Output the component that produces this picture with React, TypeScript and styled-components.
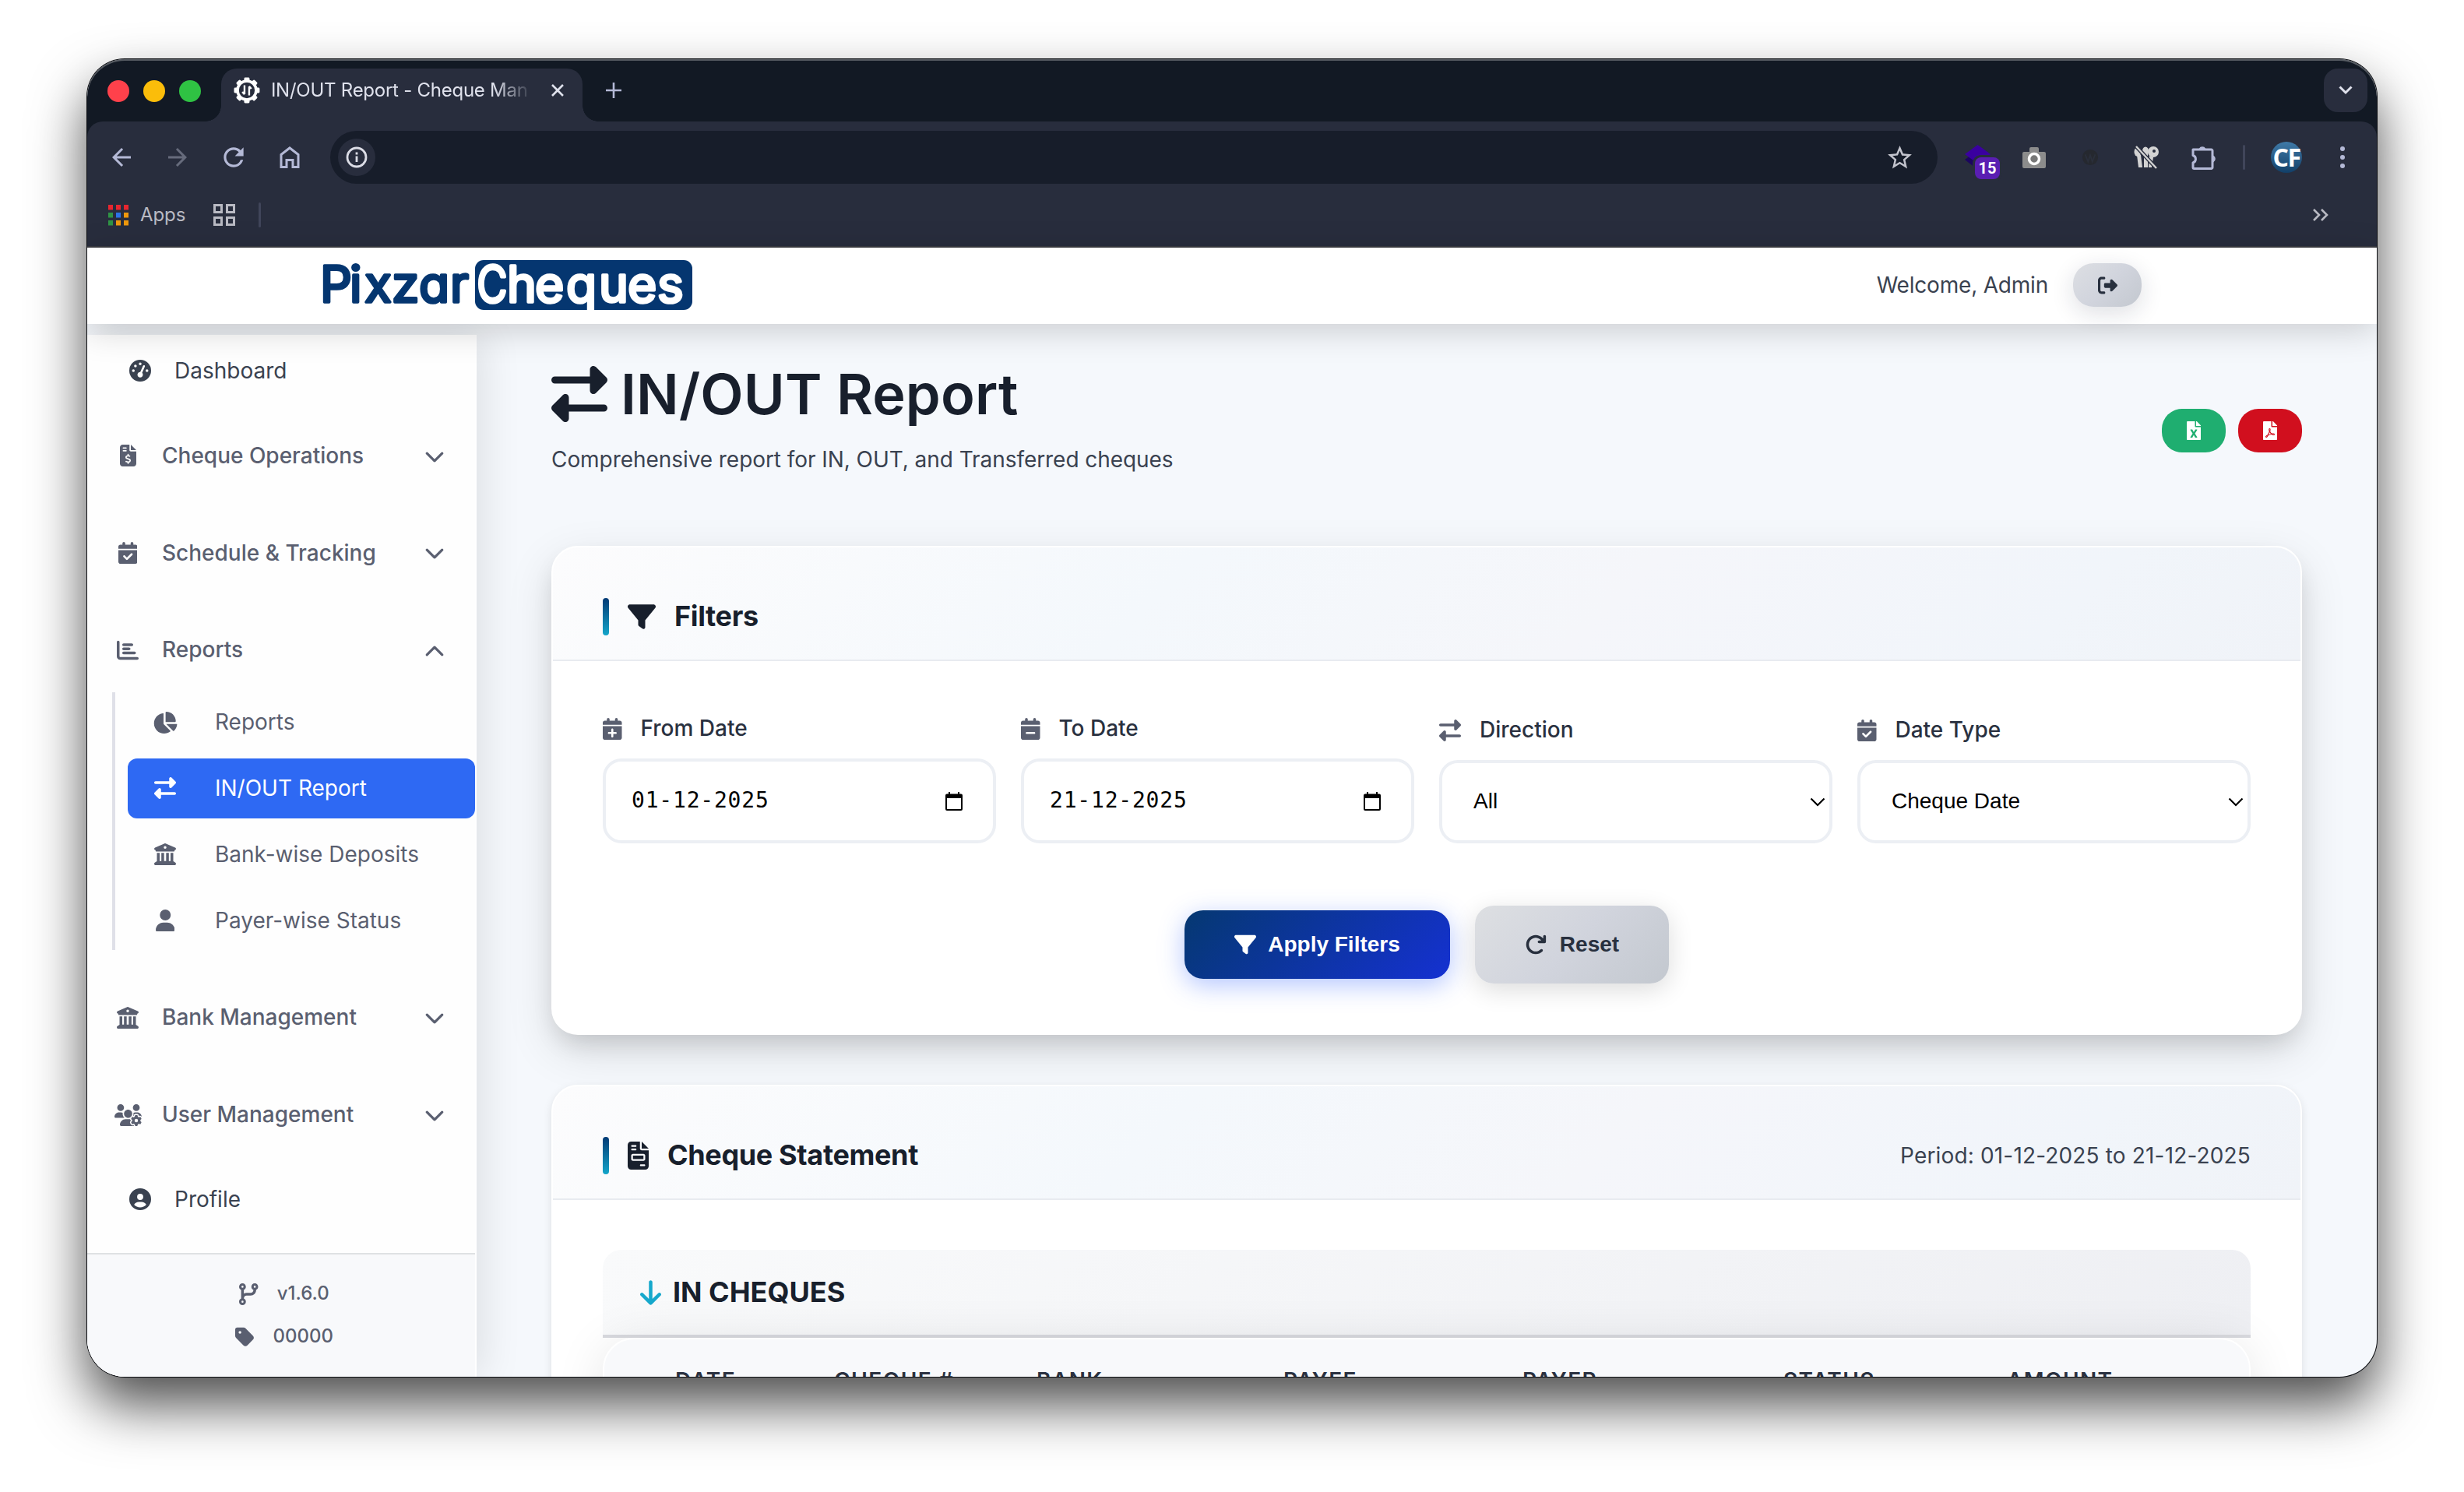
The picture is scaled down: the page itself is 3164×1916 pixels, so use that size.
import React from 'react';
import styled, { createGlobalStyle, css } from 'styled-components';
import {
  FaArrowDown,
  FaArrowRotateRight,
  FaBuildingColumns,
  FaCalendarCheck,
  FaCalendarMinus,
  FaCalendarPlus,
  FaChartBar,
  FaChartPie,
  FaCircleUser,
  FaCodeBranch,
  FaFileInvoice,
  FaFileInvoiceDollar,
  FaFilter,
  FaGaugeHigh,
  FaRightFromBracket,
  FaRightLeft,
  FaTag,
  FaUser,
  FaUsersGear,
} from 'react-icons/fa6';
import { FaFileExcel, FaFilePdf } from 'react-icons/fa';
import { BsChevronDown, BsChevronUp } from 'react-icons/bs';
import { MdArrowBack, MdArrowForward, MdRefresh, MdStarBorder } from 'react-icons/md';

const GlobalStyle = createGlobalStyle`
  * {
    box-sizing: border-box;
  }

  body {
    margin: 0;
    background: #ffffff;
    font-family: Inter, 'Liberation Sans', sans-serif;
    font-size: 28px;
    line-height: 1.6;
    color: #3a4250;
  }
`;

const Desktop = styled.div`
  width: 3164px;
  height: 1916px;
  padding: 76px 112px 0;
  overflow: hidden;
`;

const BrowserWindow = styled.div`
  display: flex;
  flex-direction: column;
  width: 2940px;
  height: 1692px;
  border-radius: 48px;
  overflow: hidden;
  background: #f5f8fc;
  box-shadow: 0 0 0 1px #0a0c10, 0 36px 70px rgba(0, 0, 0, 0.7);
`;

/* ---------- browser chrome ---------- */

const TabStrip = styled.div`
  display: flex;
  align-items: flex-end;
  height: 80px;
  padding-left: 26px;
  padding-right: 12px;
  background: #121924;
  box-shadow: inset 0 2px 0 #565b62;
  border-radius: 48px 48px 0 0;
`;

const TrafficLights = styled.div`
  display: flex;
  gap: 18px;
  margin-right: 6px;
  margin-bottom: 25px;
`;

const Light = styled.span<{ $color: string }>`
  width: 28px;
  height: 28px;
  border-radius: 50%;
  background: ${({ $color }) => $color};
`;

const TabCurve = styled.span<{ $side: 'left' | 'right' }>`
  width: 20px;
  height: 20px;
  background: radial-gradient(
    circle at ${({ $side }) => ($side === 'left' ? '0 0' : '100% 0')},
    transparent 19.5px,
    #282d3d 20px
  );
`;

const Tab = styled.div`
  display: flex;
  align-items: center;
  width: 464px;
  height: 68px;
  padding: 0 24px 12px 16px;
  border-radius: 20px 20px 0 0;
  background: #282d3d;
  color: #dfe1ec;
`;

const TabTitle = styled.span`
  width: 334px;
  margin-left: 14px;
  margin-right: 27px;
  font-size: 24px;
  letter-spacing: -0.25px;
  white-space: nowrap;
  overflow: hidden;
  mask-image: linear-gradient(90deg, #000 86%, transparent 101%);
`;

const NewTab = styled.span`
  display: flex;
  margin: 0 0 30px 10px;
`;

const TabSearch = styled.span`
  display: flex;
  align-items: center;
  justify-content: center;
  width: 56px;
  height: 56px;
  margin-left: auto;
  margin-bottom: 12px;
  border-radius: 18px;
  background: #282d3d;
`;

const ToolbarBack = styled.div`
  background: #121924;
`;

const Toolbar = styled.div`
  display: flex;
  align-items: center;
  height: 92px;
  padding: 0 8px;
  border-radius: 20px 20px 0 0;
  background: #282d3d;
  color: #b4b9d6;
`;

const ToolSlot = styled.span<{ $dim?: boolean }>`
  display: flex;
  align-items: center;
  justify-content: center;
  width: 72px;
  height: 72px;
  color: ${({ $dim }) => ($dim ? '#666b7c' : '#b4b9d6')};
`;

const AddressBar = styled.div`
  display: flex;
  align-items: center;
  justify-content: space-between;
  width: 2064px;
  height: 68px;
  margin: 0 16px;
  padding: 0 30px 0 10px;
  border-radius: 34px;
  background: #171d2a;
  color: #c3c4cd;
`;

const SiteInfo = styled.span`
  display: flex;
  align-items: center;
  justify-content: center;
  width: 48px;
  height: 48px;
  border-radius: 50%;
  background: #282d3d;
`;

const BadgedIcon = styled.span`
  position: relative;
  display: flex;
  width: 34px;
  height: 34px;
`;

const ExtensionBadge = styled.span`
  position: absolute;
  left: 13px;
  top: 17px;
  width: 32px;
  height: 28px;
  border-radius: 8px;
  background: #5a1eb2;
  box-shadow: 0 0 0 3px #282d3d;
  color: #ffffff;
  font-family: Roboto, sans-serif;
  font-size: 20px;
  font-weight: 700;
  line-height: 28px;
  text-align: center;
`;

const Separator = styled.span<{ $space: string }>`
  width: 3px;
  height: 32px;
  margin: ${({ $space }) => $space};
  border-radius: 2px;
  background: #40455a;
`;

const Avatar = styled.span`
  display: flex;
  align-items: center;
  justify-content: center;
  width: 40px;
  height: 40px;
  border-radius: 50%;
  background: linear-gradient(180deg, #3f7aa8, #123f68);
  color: #ffffff;
  font-family: 'Open Sans', sans-serif;
  font-size: 32px;
  font-weight: 700;
  letter-spacing: -1.5px;
  line-height: 1;
`;

const BookmarkBar = styled.div`
  display: flex;
  align-items: center;
  height: 70px;
  padding: 0 62px 12px 27px;
  border-bottom: 2px solid #3a3b41;
  background: #282d3d;
  color: #b9bac3;
  font-size: 24px;
`;

const AppsLabel = styled.span`
  margin: 0 36px 0 15px;
  letter-spacing: -0.1px;
`;

const Overflow = styled.span`
  display: flex;
  margin-left: auto;
`;

/* ---------- page ---------- */

const Navbar = styled.header`
  position: relative;
  z-index: 2;
  display: flex;
  align-items: center;
  justify-content: space-between;
  height: 98px;
  flex-shrink: 0;
  padding: 0 302px 0 292px;
  background: #ffffff;
  box-shadow: 0 8px 44px rgba(0, 0, 0, 0.18);
`;

const LogoSvg = styled.svg`
  display: block;
  margin-top: -2px;
  overflow: visible;
  font-family: Inter, sans-serif;
  font-size: 64px;
  font-feature-settings: 'cv11';
`;

const UserArea = styled.div`
  display: flex;
  align-items: center;
  gap: 32px;
  padding-bottom: 2px;
  letter-spacing: -0.2px;
`;

const LogoutButton = styled.button`
  display: flex;
  align-items: center;
  justify-content: center;
  width: 88px;
  height: 56px;
  border: 0;
  border-radius: 26px;
  background: linear-gradient(135deg, #dddfe3, #d1d4dd 50%, #c3c8cf);
  box-shadow: 0 8px 30px rgba(20, 30, 60, 0.14);
  color: #28303e;
`;

const Body = styled.div`
  display: flex;
  flex: 1;
  min-height: 0;
`;

const Sidebar = styled.aside`
  display: flex;
  flex-direction: column;
  width: 500px;
  height: 1338px;
  margin-top: 14px;
  flex-shrink: 0;
  border-right: 2px solid #ffffff;
  background: #fefefe;
  box-shadow: 8px 0 48px rgba(0, 0, 0, 0.1);
`;

const Nav = styled.nav`
  display: flex;
  flex-direction: column;
  gap: 32px;
  height: 1179px;
  padding-top: 8px;
`;

const NavGroups = styled.div`
  display: flex;
  flex-direction: column;
  gap: 48px;
`;

// $ratio is the width of the glyph relative to its height
const Icon = styled.span<{ $size?: number; $ratio?: number; $color?: string }>`
  display: inline-flex;
  justify-content: center;
  flex-shrink: 0;
  color: ${({ $color }) => $color || 'inherit'};

  svg {
    flex-shrink: 0;
    width: ${({ $size = 28, $ratio = 1 }) => $size * $ratio}px;
    height: ${({ $size = 28 }) => $size}px;
  }
`;

const NavLink = styled.a`
  display: flex;
  align-items: center;
  height: 76.8px;
  padding-left: 48px;

  ${Icon} {
    width: 40px;
    margin-right: 24px;
  }
`;

const GroupHeader = styled.div`
  display: flex;
  align-items: center;
  height: 76.8px;
  padding: 0 39px 0 32px;
  color: #5a5f70;
  font-weight: 500;
`;

const GroupIcon = styled(Icon)`
  width: 40px;
  margin-right: 24px;
`;

const GroupChevron = styled(Icon)`
  margin-left: auto;
  margin-top: 3px;
`;

const SubList = styled.div`
  display: flex;
  flex-direction: column;
  gap: 8px;
  margin: 16px 0 0 32px;
  padding-left: 16px;
  border-left: 4px solid #dfe0e8;
`;

const SubLink = styled.a<{ $active?: boolean }>`
  display: flex;
  align-items: center;
  height: 76.8px;
  padding-left: 28px;
  border-radius: 12px;
  color: #5a5f70;

  ${Icon} {
    width: 40px;
    margin-right: 44px;
  }

  ${({ $active }) =>
    $active &&
    css`
      background: #2e69f3;
      color: #ffffff;
    `}
`;

const SidebarFooter = styled.div`
  display: flex;
  flex-direction: column;
  align-items: center;
  gap: 16px;
  flex: 1;
  padding: 31px 0 0 8px;
  border-top: 2px solid #dfe1e3;
  background: #f8f9fb;
  color: #5a5f70;
  font-size: 24px;
  font-weight: 500;
`;

const VersionRow = styled.div`
  display: flex;
  align-items: center;
  gap: 24px;
  height: 39px;
`;

const Main = styled.main`
  flex: 1;
  min-width: 0;
  padding: 47px 96px 0;
`;

const PageHeader = styled.div`
  display: flex;
  align-items: center;
  justify-content: space-between;
  height: 180px;
  margin-bottom: 58px;
`;

const PageTitle = styled.h1`
  display: flex;
  align-items: center;
  gap: 17px;
  margin: 0 0 19px;
  color: #181f2c;
  font-size: 72px;
  font-weight: 600;
  line-height: 86px;
  letter-spacing: 0.15px;
`;

const PageSubtitle = styled.p`
  margin: 0 0 31px;
  line-height: 45px;
  letter-spacing: -0.06px;
`;

const ExportButtons = styled.div`
  display: flex;
  gap: 16px;
`;

const ExportButton = styled.button<{ $color: string }>`
  display: flex;
  align-items: center;
  justify-content: center;
  width: 82px;
  height: 56px;
  border: 0;
  border-radius: 26px;
  background: ${({ $color }) => $color};
  color: #ffffff;
`;

const Card = styled.section<{ $shadow: string }>`
  margin-bottom: 64px;
  border: 2px solid #ffffff;
  border-radius: 34px;
  background: #ffffff;
  box-shadow: ${({ $shadow }) => $shadow};
`;

const CardHeader = styled.div`
  display: flex;
  align-items: center;
  justify-content: space-between;
  height: 146px;
  padding: 65px 64px 31px;
  border-bottom: 2px solid #e8ebf0;
  border-radius: 32px 32px 0 0;
  background: linear-gradient(135deg, #fcfcfd 0%, #f4f8fc 35%, #f5f6fa 60%, #f1f5fa 85%, #f0f3f8 100%);
`;

const CardTitle = styled.h2`
  display: flex;
  align-items: center;
  gap: 24px;
  margin: 0;
  color: #181f2c;
  font-size: 36px;
  font-weight: 700;
  letter-spacing: -0.35px;

  &::before {
    content: '';
    width: 8px;
    height: 48px;
    border-radius: 4px;
    background: linear-gradient(180deg, #033a75, #14a6ca);
  }
`;

const Period = styled.span`
  letter-spacing: 0.16px;
`;

const CardBody = styled.div`
  padding: 64px;
`;

const FilterGrid = styled.div`
  display: grid;
  grid-template-columns: repeat(4, 1fr);
  align-items: end;
  gap: 32px;
`;

const FieldLabel = styled.label`
  display: flex;
  align-items: center;
  gap: 24px;
  height: 45px;
  margin-bottom: 16px;
  color: #2a3140;
  font-weight: 500;
`;

const Control = styled.div<{ $kind: 'date' | 'select' }>`
  display: flex;
  align-items: center;
  justify-content: space-between;
  border: 4px solid #eceff4;
  border-radius: 24px;
  background: #ffffff;
  color: #000000;

  ${({ $kind }) =>
    $kind === 'date'
      ? css`
          height: 109px;
          padding: 0 39px 0 33px;
          font-family: 'DejaVu Sans Mono', monospace;
          letter-spacing: 0.8px;
        `
      : css`
          height: 107px;
          padding: 0 5px 0 40px;
          font-family: 'Liberation Sans', Arial, sans-serif;
        `}
`;

const ButtonRow = styled.div`
  display: flex;
  align-items: center;
  justify-content: center;
  gap: 32px;
  margin-top: 80px;
`;

const ActionButton = styled.button<{ $primary?: boolean }>`
  display: flex;
  align-items: center;
  justify-content: center;
  border: 0;
  border-radius: 24px;
  font-family: 'Liberation Sans', Arial, sans-serif;
  font-size: 28px;
  font-weight: 700;

  ${({ $primary }) =>
    $primary
      ? css`
          gap: 15px;
          width: 341px;
          height: 88px;
          background: linear-gradient(135deg, #053871, #1531d2);
          box-shadow: 0 8px 32px rgba(45, 95, 255, 0.36);
          color: #ffffff;
        `
      : css`
          gap: 17px;
          width: 249px;
          height: 100px;
          background: linear-gradient(135deg, #dddfe2, #d1d4dd 50%, #c3c8cf);
          box-shadow: 0 8px 32px rgba(0, 0, 0, 0.14);
          color: #28303e;
        `}
`;

const SectionHeader = styled.div`
  display: flex;
  align-items: center;
  gap: 15px;
  height: 113px;
  padding: 0 48px;
  border-bottom: 4px solid #d9dadf;
  border-radius: 24px 24px 0 0;
  background: linear-gradient(135deg, #f9fafb, #eeeff3);
  color: #181f2c;
  font-size: 36px;
  font-weight: 700;
`;

const TableShell = styled.div`
  position: relative;
  border: 2px solid #ffffff;
  border-radius: 40px 40px 0 0;
  background: #f8f9fb;
  box-shadow: 0 8px 64px rgba(0, 0, 0, 0.1);
`;

const TableHead = styled.div`
  display: grid;
  grid-template-columns: 204px 260px 317px 307px 335px 287px 1fr;
  height: 120px;
  padding: 33px 0 0 91px;
  color: #2a3140;
  font-size: 28px;
  font-weight: 600;
  letter-spacing: 1.4px;
  line-height: 40px;
`;

const GearFavicon = () => (
  <svg width="34" height="34" viewBox="0 0 34 34">
    <circle cx="17" cy="17" r="12" fill="none" stroke="#fff" strokeWidth="3.6" />
    {[0, 45, 90, 135, 180, 225, 270, 315].map((angle) => (
      <rect key={angle} x="13.5" y="0.5" width="7" height="6" rx="1.5" fill="#fff" transform={`rotate(${angle} 17 17)`} />
    ))}
    <path d="M14 10.5V22m-2.8-3 2.8 3.2M20 23.500V12m2.800 3L20 11.800" fill="none" stroke="#fff" strokeWidth="2.4" />
  </svg>
);

const HomeIcon = () => (
  <svg width="26" height="30" viewBox="0 0 26 30" fill="none" stroke="currentColor" strokeWidth="3">
    <path d="M2 27.5V11.5L13 3l11 8.5v16h-7v-9H9v9z" />
  </svg>
);

const PuzzleIcon = () => (
  <svg width="38" height="34" viewBox="-4 0 38 34" fill="none" stroke="currentColor" strokeWidth="3" strokeLinejoin="round">
    <path d="M3 7h23.5a1.500 1.500 0 0 1 1.500 1.500V30a1.500 1.500 0 0 1-1.500 1.500H4.500A1.500 1.500 0 0 1 3 30v-6a5 5 0 0 0 0-9.500z" />
    <path d="M11.5 6a4 4 0 0 1 7 0zM29 15.5a4 4 0 0 1 0 7z" fill="currentColor" strokeWidth="1.5" />
  </svg>
);

const CameraIcon = () => (
  <svg width="30" height="30" viewBox="0 0 30 30">
    <path d="M2 8h7V4a2 2 0 0 1 2-2h8a2 2 0 0 1 2 2v4h7a2 2 0 0 1 2 2v17a2 2 0 0 1-2 2H2a2 2 0 0 1-2-2V10a2 2 0 0 1 2-2z" fill="#8c8c8c" />
    <circle cx="15" cy="17" r="6.5" fill="#777" stroke="#fff" strokeWidth="3.5" />
  </svg>
);

const BlogIcon = () => (
  <svg width="22" height="22" viewBox="0 0 24 24">
    <circle cx="12" cy="12" r="11" fill="#25282f" />
    <path d="M5 8l4 10 3-9 3 9 4-10" fill="none" stroke="#2a2f3b" strokeWidth="2" />
  </svg>
);

const KeysIcon = () => (
  <svg width="32" height="30" viewBox="0 0 32 30">
    <g fill="#d3d3d3">
      <ellipse cx="5" cy="8" rx="4.5" ry="6" />
      <path d="M4 12h5l2 16H6z" />
      <ellipse cx="15" cy="7" rx="4" ry="5.5" />
      <path d="M13 11h5v17h-5z" />
      <circle cx="25" cy="8" r="7" />
      <path d="M20 13l5 2-2 13h-4z" />
    </g>
    <circle cx="26" cy="7" r="2" fill="#282d3d" />
    <path d="M3 1l26 28" stroke="#282d3d" strokeWidth="5" />
    <path d="M3 1l26 28" stroke="#d3d3d3" strokeWidth="2.4" />
  </svg>
);

const LayersIcon = () => (
  <svg width="34" height="34" viewBox="0 0 34 34">
    <path d="M0 20l8-6 12 10-6 7z" fill="#1c0560" />
    <path d="M0 13 16.5 1 33 13 16.5 25z" fill="#3a00a0" />
  </svg>
);

const appColors = ['#e8262f', '#e8262f', '#e8262f', '#2f9445', '#2b74e8', '#ee980d', '#2f9445', '#ee980d', '#ee980d'];

const AppsIcon = () => (
  <svg width="26" height="27" viewBox="0 0 26 27">
    {appColors.map((color, i) => (
      <rect key={i} x={(i % 3) * 10} y={Math.floor(i / 3) * 10} width="6" height="6.5" fill={color} />
    ))}
  </svg>
);

const CalendarIcon = () => (
  <svg width="22" height="24" viewBox="0 0 22 24">
    <path
      fillRule="evenodd"
      d="M2 2.5h2V0h2v2.5h10V0h2v2.5h2a2 2 0 0 1 2 2V22a2 2 0 0 1-2 2H2a2 2 0 0 1-2-2V4.5a2 2 0 0 1 2-2zM2 8v14h18V8z"
    />
  </svg>
);

const SelectArrow = () => (
  <svg width="20" height="12" viewBox="0 0 20 12" fill="none" stroke="#000" strokeWidth="2.2">
    <path d="M1.5 1.5 10 10l8.500-8.500" />
  </svg>
);

const Logo = () => (
  <LogoSvg width="486" height="64" viewBox="-10 0 486 64" strokeLinejoin="round" strokeWidth="3.6">
    <rect x="196" y="0" width="279" height="64" rx="11" fill="#053670" />
    <g fill="#053670" stroke="#053670">
      <text x="-3 35 54 89 124 164" y="54">Pixzar</text>
    </g>
    <g fill="#fff" stroke="#fff">
      <text x="236" y="54" transform="scale(0.84 1)">C</text>
      <text x="237 273 313 355 392 430" y="54">heques</text>
    </g>
  </LogoSvg>
);

const reportLinks = [
  { label: 'Reports', icon: <FaChartPie />, ratio: 1.125 },
  { label: 'IN/OUT Report', icon: <FaRightLeft />, active: true },
  { label: 'Bank-wise Deposits', icon: <FaBuildingColumns /> },
  { label: 'Payer-wise Status', icon: <FaUser />, ratio: 0.875 },
];

const filters = [
  { label: 'From Date', icon: <FaCalendarPlus />, ratio: 0.875, kind: 'date', value: '01-12-2025' },
  { label: 'To Date', icon: <FaCalendarMinus />, ratio: 0.875, kind: 'date', value: '21-12-2025' },
  { label: 'Direction', icon: <FaRightLeft />, ratio: 1, kind: 'select', value: 'All' },
  { label: 'Date Type', icon: <FaCalendarCheck />, ratio: 0.875, kind: 'select', value: 'Cheque Date' },
] as const;

const columns = ['DATE', 'CHEQUE #', 'BANK', 'PAYEE', 'PAYER', 'STATUS', 'AMOUNT'];

const Group = ({ icon, ratio, label, open, children }: any) => (
  <div>
    <GroupHeader>
      <GroupIcon $ratio={ratio}>{icon}</GroupIcon>
      <span>{label}</span>
      <GroupChevron $size={26}>
        {open ? <BsChevronUp strokeWidth={1} /> : <BsChevronDown strokeWidth={1} />}
      </GroupChevron>
    </GroupHeader>
    {children}
  </div>
);

const BrowserChrome = () => (
  <>
    <TabStrip>
      <TrafficLights>
        <Light $color="#ff414b" />
        <Light $color="#fbbd0a" />
        <Light $color="#2fc243" />
      </TrafficLights>
      <TabCurve $side="left" />
      <Tab>
        <GearFavicon />
        <TabTitle>IN/OUT Report - Cheque Man</TabTitle>
        <svg width="16" height="16" viewBox="0 0 16 16" stroke="#dfe1ec" strokeWidth="2.6">
          <path d="M1 1l14 14M15 1 1 15" />
        </svg>
      </Tab>
      <TabCurve $side="right" />
      <NewTab>
        <svg width="20" height="20" viewBox="0 0 20 20" stroke="#b4b9d6" strokeWidth="2.6">
          <path d="M10 0v20M0 10h20" />
        </svg>
      </NewTab>
      <TabSearch>
        <svg width="18" height="12" viewBox="0 0 18 12" fill="none" stroke="#dfe1ec" strokeWidth="3">
          <path d="M1.5 1.5 9 9l7.500-7.500" />
        </svg>
      </TabSearch>
    </TabStrip>
    <ToolbarBack>
      <Toolbar>
        <ToolSlot><MdArrowBack size={36} /></ToolSlot>
        <ToolSlot $dim><MdArrowForward size={36} /></ToolSlot>
        <ToolSlot><MdRefresh size={38} /></ToolSlot>
        <ToolSlot><HomeIcon /></ToolSlot>
        <AddressBar>
          <SiteInfo>
            <svg width="28" height="28" viewBox="0 0 28 28" fill="none" stroke="#dcdde6" strokeWidth="2.8">
              <circle cx="14" cy="14" r="12" />
              <path d="M14 12.5v7.5M14 7.5v3" />
            </svg>
          </SiteInfo>
          <MdStarBorder size={37} />
        </AddressBar>
        <ToolSlot>
          <BadgedIcon>
            <LayersIcon />
            <ExtensionBadge>15</ExtensionBadge>
          </BadgedIcon>
        </ToolSlot>
        <ToolSlot><CameraIcon /></ToolSlot>
        <ToolSlot><BlogIcon /></ToolSlot>
        <ToolSlot><KeysIcon /></ToolSlot>
        <ToolSlot><PuzzleIcon /></ToolSlot>
        <Separator $space="0 17px 0 16px" />
        <ToolSlot><Avatar>CF</Avatar></ToolSlot>
        <ToolSlot>
          <svg width="6" height="28" viewBox="0 0 6 28" fill="currentColor">
            <circle cx="3" cy="3" r="3" />
            <circle cx="3" cy="14" r="3" />
            <circle cx="3" cy="25" r="3" />
          </svg>
        </ToolSlot>
      </Toolbar>
      <BookmarkBar>
        <AppsIcon />
        <AppsLabel>Apps</AppsLabel>
        <svg width="28" height="28" viewBox="0 0 28 28" fill="none" stroke="currentColor" strokeWidth="3">
          <path d="M1.5 1.5h9v9h-9zM17.5 1.5h9v9h-9zM1.5 17.5h9v9h-9zM17.5 17.5h9v9h-9z" />
        </svg>
        <Separator $space="0 0 0 30px" />
        <Overflow>
          <svg width="20" height="16" viewBox="0 0 20 16" fill="none" stroke="currentColor" strokeWidth="2.6">
            <path d="M1 1l7 7-7 7M11 1l7 7-7 7" />
          </svg>
        </Overflow>
      </BookmarkBar>
    </ToolbarBack>
  </>
);

const App = () => {
  return (
    <>
      <GlobalStyle />
      <Desktop>
        <BrowserWindow>
          <BrowserChrome />
          <Navbar>
            <Logo />
            <UserArea>
              <span>Welcome, Admin</span>
              <LogoutButton>
                <Icon $size={25}><FaRightFromBracket /></Icon>
              </LogoutButton>
            </UserArea>
          </Navbar>

          <Body>
            <Sidebar>
              <Nav>
                <NavLink>
                  <Icon><FaGaugeHigh /></Icon>
                  <span>Dashboard</span>
                </NavLink>
                <NavGroups>
                  <Group icon={<FaFileInvoiceDollar />} ratio={0.75} label="Cheque Operations" />
                  <Group icon={<FaCalendarCheck />} ratio={0.875} label="Schedule &amp; Tracking" />
                  <Group icon={<FaChartBar />} label="Reports" open>
                    <SubList>
                      {reportLinks.map((link) => (
                        <SubLink key={link.label} $active={link.active}>
                          <Icon $ratio={link.ratio}>{link.icon}</Icon>
                          <span>{link.label}</span>
                        </SubLink>
                      ))}
                    </SubList>
                  </Group>
                  <Group icon={<FaBuildingColumns />} label="Bank Management" />
                  <Group icon={<FaUsersGear />} ratio={1.25} label="User Management" />
                </NavGroups>
                <NavLink>
                  <Icon><FaCircleUser /></Icon>
                  <span>Profile</span>
                </NavLink>
              </Nav>
              <SidebarFooter>
                <VersionRow>
                  <Icon $ratio={0.875}><FaCodeBranch /></Icon>
                  <span>v1.6.0</span>
                </VersionRow>
                <VersionRow>
                  <Icon $ratio={0.875}><FaTag /></Icon>
                  <span>00000</span>
                </VersionRow>
              </SidebarFooter>
            </Sidebar>

            <Main>
              <PageHeader>
                <div>
                  <PageTitle>
                    <Icon $size={72}><FaRightLeft /></Icon>
                    <span>IN/OUT Report</span>
                  </PageTitle>
                  <PageSubtitle>Comprehensive report for IN, OUT, and Transferred cheques</PageSubtitle>
                </div>
                <ExportButtons>
                  <ExportButton $color="#1fae70">
                    <Icon $size={24} $ratio={0.75}><FaFileExcel /></Icon>
                  </ExportButton>
                  <ExportButton $color="#d10f1e">
                    <Icon $size={24} $ratio={0.75}><FaFilePdf /></Icon>
                  </ExportButton>
                </ExportButtons>
              </PageHeader>

              <Card $shadow="0 20px 60px rgba(0, 0, 0, 0.12), 0 16px 32px -8px rgba(0, 0, 0, 0.14)">
                <CardHeader>
                  <CardTitle>
                    <Icon $size={36}><FaFilter /></Icon>
                    <span>Filters</span>
                  </CardTitle>
                </CardHeader>
                <CardBody>
                  <FilterGrid>
                    {filters.map((filter) => (
                      <div key={filter.label}>
                        <FieldLabel>
                          <Icon $color="#5a5f70" $ratio={filter.ratio}>{filter.icon}</Icon>
                          {filter.label}
                        </FieldLabel>
                        <Control $kind={filter.kind}>
                          <span>{filter.value}</span>
                          {filter.kind === 'date' ? <CalendarIcon /> : <SelectArrow />}
                        </Control>
                      </div>
                    ))}
                  </FilterGrid>
                  <ButtonRow>
                    <ActionButton $primary>
                      <Icon><FaFilter /></Icon>
                      Apply Filters
                    </ActionButton>
                    <ActionButton>
                      <Icon><FaArrowRotateRight /></Icon>
                      Reset
                    </ActionButton>
                  </ButtonRow>
                </CardBody>
              </Card>

              <Card $shadow="0 4px 12px rgba(0, 0, 0, 0.1)">
                <CardHeader>
                  <CardTitle>
                    <Icon $size={36} $ratio={0.75}><FaFileInvoice /></Icon>
                    <span>Cheque Statement</span>
                  </CardTitle>
                  <Period>Period: 01-12-2025 to 21-12-2025</Period>
                </CardHeader>
                <CardBody>
                  <SectionHeader>
                    <Icon $size={36} $ratio={0.75} $color="#16a8cc"><FaArrowDown /></Icon>
                    <span>IN CHEQUES</span>
                  </SectionHeader>
                  <TableShell>
                    <TableHead>
                      {columns.map((column) => (
                        <span key={column}>{column}</span>
                      ))}
                    </TableHead>
                  </TableShell>
                </CardBody>
              </Card>
            </Main>
          </Body>
        </BrowserWindow>
      </Desktop>
    </>
  );
};

export default App;
